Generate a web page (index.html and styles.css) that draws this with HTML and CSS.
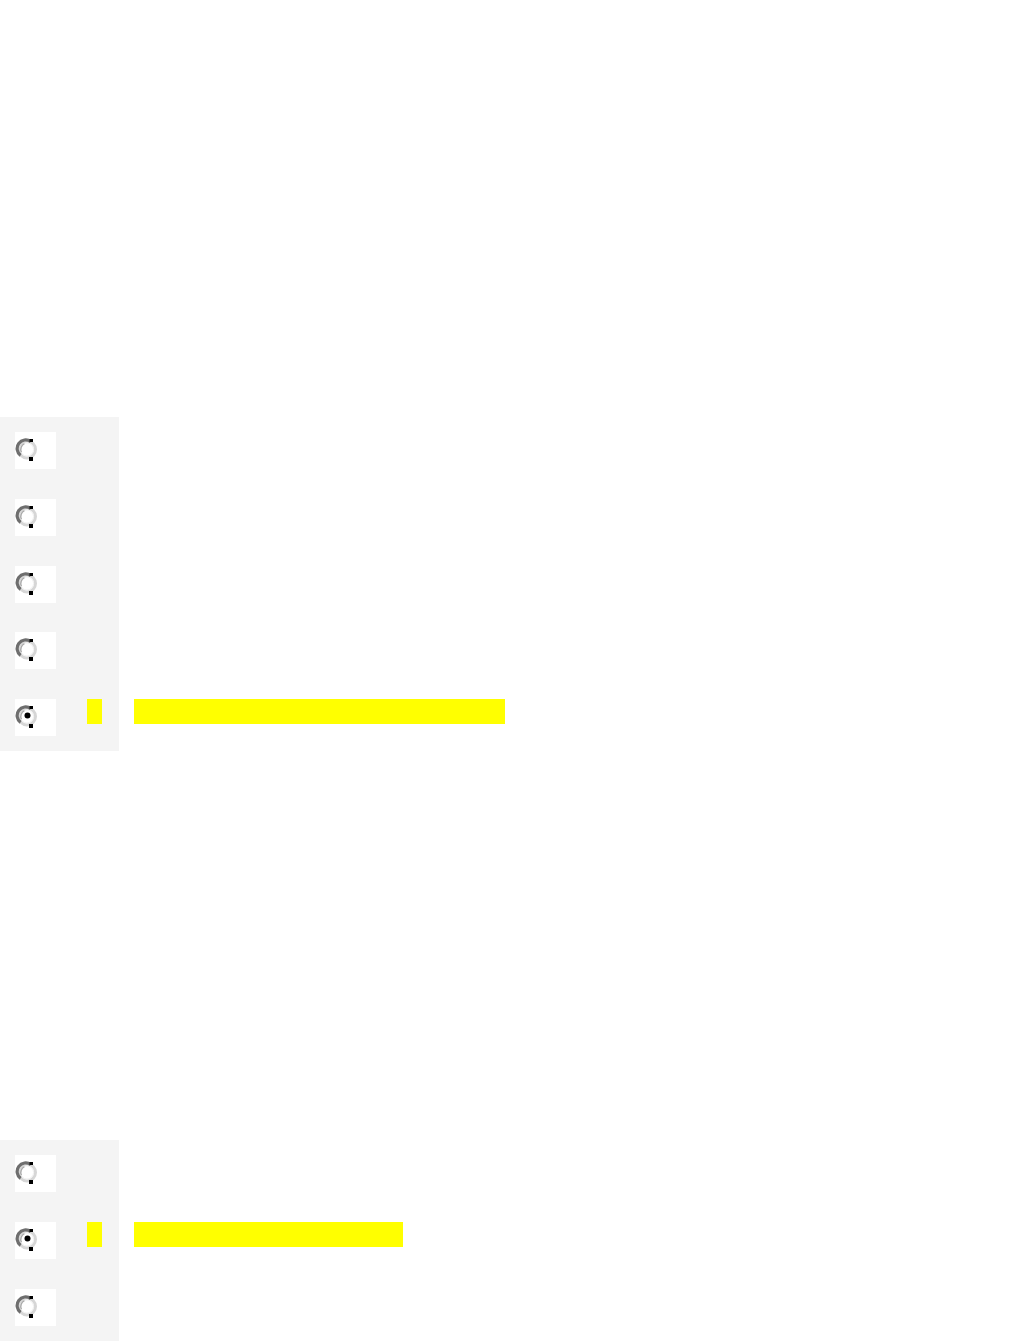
FILE: index.html
```html
<!DOCTYPE html>
<html>
<head>
<meta charset="utf-8">
<link rel="stylesheet" href="styles.css">
</head>
<body>
<div class="spacer-top"></div>
<section class="group group-a">
  <div class="row"><div class="box"><svg class="radio" width="24" height="24" viewBox="0 0 24 24"><use href="#r"/></svg></div></div>
  <div class="row"><div class="box"><svg class="radio" width="24" height="24" viewBox="0 0 24 24"><use href="#r"/></svg></div></div>
  <div class="row"><div class="box"><svg class="radio" width="24" height="24" viewBox="0 0 24 24"><use href="#r"/></svg></div></div>
  <div class="row"><div class="box"><svg class="radio" width="24" height="24" viewBox="0 0 24 24"><use href="#r"/></svg></div></div>
  <div class="row"><div class="box"><svg class="radio" width="24" height="24" viewBox="0 0 24 24"><use href="#r"/><circle cx="12.5" cy="10.5" r="3" fill="#000"/></svg></div><span class="mark"></span><span class="hl hl-long"></span></div>
</section>
<div class="spacer-mid"></div>
<section class="group group-b">
  <div class="row"><div class="box"><svg class="radio" width="24" height="24" viewBox="0 0 24 24"><use href="#r"/></svg></div></div>
  <div class="row"><div class="box"><svg class="radio" width="24" height="24" viewBox="0 0 24 24"><use href="#r"/><circle cx="12.5" cy="10.5" r="3" fill="#000"/></svg></div><span class="mark"></span><span class="hl hl-short"></span></div>
  <div class="row"><div class="box"><svg class="radio" width="24" height="24" viewBox="0 0 24 24"><use href="#r"/></svg></div></div>
</section>
<svg width="0" height="0" class="defs">
  <defs>
    <g id="r">
      <circle cx="12" cy="11.5" r="8.5" fill="#fff" stroke="#d6d6d6" stroke-width="3"/>
      <circle cx="12" cy="11.5" r="6.6" fill="none" stroke="#efefef" stroke-width="1"/>
      <path d="M15.8 3.6 A8.5 8.5 0 0 0 5.6 17.4" fill="none" stroke="#6e6e6e" stroke-width="3.2"/>
      <path d="M9.4 5.6 A6.5 6.5 0 0 0 6.4 14.2" fill="none" stroke="#a8a8a8" stroke-width="1.4"/>
      <rect x="14.5" y="1" width="3.5" height="3" fill="#000"/>
      <rect x="14" y="19" width="4" height="4" fill="#000"/>
    </g>
  </defs>
</svg>
</body>
</html>
```

FILE: styles.css
```css
html, body {
  margin: 0;
  padding: 0;
  background: #ffffff;
}

body {
  font-family: "Liberation Sans", Arial, sans-serif;
  width: 1021px;
  overflow: hidden;
}

.spacer-top {
  height: 417px;
}

.spacer-mid {
  height: 389px;
}

.group {
  display: flex;
  flex-direction: column;
  gap: 29.75px;
  padding: 15px 0;
  background: linear-gradient(to right, #f4f4f4 119px, #ffffff 119px);
}

.group-b {
  gap: 30px;
  padding-bottom: 40px;
}

.row {
  display: flex;
  align-items: flex-start;
  height: 37px;
  padding-left: 15px;
}

.box {
  width: 41px;
  height: 37px;
  background: #ffffff;
  box-sizing: border-box;
  padding: 6px 0 0 0;
}

.radio {
  display: block;
}

.mark {
  display: block;
  margin-left: 31px;
  width: 15px;
  height: 25px;
  background: #ffff00;
}

.hl {
  display: block;
  margin-left: 32px;
  height: 25px;
  background: #ffff00;
}

.hl-long {
  width: 371px;
}

.hl-short {
  width: 269px;
}

.defs {
  position: absolute;
  width: 0;
  height: 0;
}
```
